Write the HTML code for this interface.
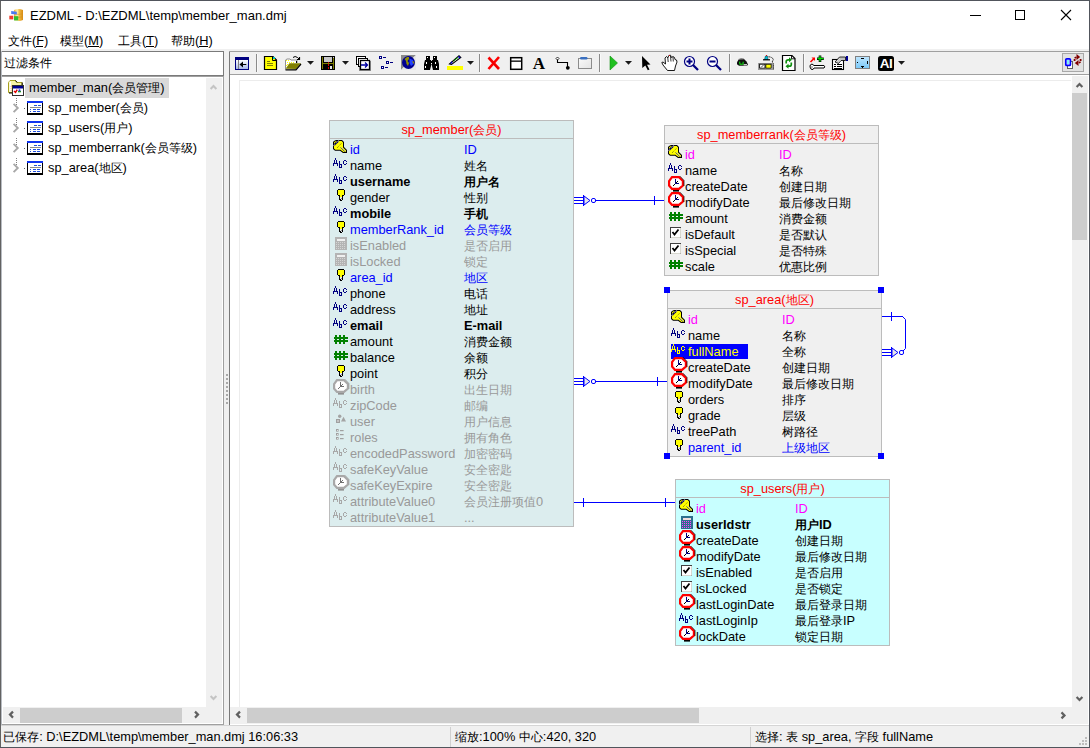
<!DOCTYPE html>
<html><head><meta charset="utf-8"><title>EZDML</title>
<style>html,body{margin:0;padding:0;overflow:hidden}body{width:1090px;height:748px;position:relative;background:#f0f0f0}</style>
</head><body>
<svg width="1090" height="748" viewBox="0 0 1090 748" font-family="Liberation Sans" style="position:absolute;left:0;top:0">
<defs>
<symbol id="key" viewBox="0 0 18 16" overflow="visible">
 <path d="M5 2 H11 L12 3 L13 4 V9 L16 12 V15 H12 L9 12.8 H4 L2 11 V4 L3 3 Z" fill="#000"/>
 <path d="M5.4 3 H10.6 L12 4.4 V9.4 L15 12.4 V14 H12.4 L9.4 11.8 H4.4 L3 10.6 V4.4 L4 3.6 Z" fill="#ffff00"/>
 <path d="M3 7.2 L7.4 2.8" stroke="#000040" stroke-width="1.8"/>
 <path d="M3.6 6.6 L7 3.2" stroke="#ffffff" stroke-width="0.8" stroke-dasharray="0.8 1.2"/>
 <path d="M6 10 L10.6 5.2" stroke="#707010" stroke-width="1" stroke-dasharray="1 1"/>
 <path d="M9.8 9.4 L14.2 13.8" stroke="#202060" stroke-width="1"/>
 <path d="M10.4 9.2 L14.4 13.2" stroke="#ffffff" stroke-width="0.5"/>
 <path d="M7.6 1.8 V4.2 M2 7.6 H3.8" stroke="#a8a8a8" stroke-width="0.7"/>
</symbol>
<symbol id="abc" viewBox="0 0 18 16" overflow="visible">
 <g fill="currentColor" shape-rendering="crispEdges">
 <rect x="5" y="2" width="1" height="2"/><rect x="4" y="4" width="1" height="3"/><rect x="6" y="4" width="1" height="3"/>
 <rect x="3" y="7" width="5" height="1"/><rect x="3" y="8" width="1" height="2"/><rect x="7" y="8" width="1" height="2"/>
 <rect x="9" y="5" width="1" height="7"/><rect x="10" y="8" width="1" height="1"/><rect x="11" y="8" width="1" height="4"/><rect x="10" y="11" width="1" height="1"/>
 <rect x="14" y="4" width="2" height="1"/><rect x="13" y="5" width="1" height="3"/><rect x="16" y="5" width="1" height="1"/><rect x="16" y="7" width="1" height="1"/><rect x="14" y="8" width="2" height="1"/>
 </g>
</symbol>
<symbol id="bulb" viewBox="0 0 16 16" overflow="visible">
 <g shape-rendering="crispEdges">
 <rect x="5" y="2" width="6" height="1" fill="#000"/>
 <rect x="4" y="3" width="8" height="5" fill="#000"/>
 <rect x="5" y="3" width="6" height="5" fill="#ffff00"/>
 <rect x="5" y="8" width="6" height="1" fill="#000"/>
 <rect x="7" y="8" width="2" height="2" fill="#ffff00"/>
 <rect x="6" y="9" width="1" height="4" fill="#000"/><rect x="9" y="9" width="1" height="4" fill="#000"/>
 <rect x="7" y="10" width="2" height="2" fill="#e8e8e8"/><rect x="7" y="12" width="1" height="1" fill="#000"/><rect x="8" y="11" width="1" height="1" fill="#909090"/>
 <rect x="7" y="13" width="2" height="1" fill="#000"/><rect x="8" y="12" width="1" height="1" fill="#e8e8e8"/>
 </g>
</symbol>
<symbol id="calc" viewBox="0 0 16 16" overflow="visible">
 <g shape-rendering="crispEdges">
 <rect x="0" y="0" width="12" height="13" fill="currentColor"/>
 <rect x="2" y="2" width="8" height="2" fill="var(--bar)"/>
 <g fill="var(--dot)">
 <rect x="1" y="5" width="1" height="1"/><rect x="3" y="5" width="1" height="1"/><rect x="5" y="5" width="1" height="1"/><rect x="7" y="5" width="1" height="1"/><rect x="9" y="5" width="1" height="1"/>
 <rect x="1" y="7" width="1" height="1"/><rect x="3" y="7" width="1" height="1"/><rect x="5" y="7" width="1" height="1"/><rect x="7" y="7" width="1" height="1"/><rect x="9" y="7" width="1" height="1"/>
 <rect x="1" y="9" width="1" height="1"/><rect x="3" y="9" width="1" height="1"/><rect x="5" y="9" width="1" height="1"/><rect x="7" y="9" width="1" height="1"/><rect x="9" y="9" width="1" height="1"/>
 <rect x="1" y="11" width="1" height="1"/><rect x="3" y="11" width="1" height="1"/><rect x="5" y="11" width="1" height="1"/><rect x="7" y="11" width="1" height="1"/><rect x="9" y="11" width="1" height="1"/>
 </g></g>
</symbol>
<symbol id="hash" viewBox="0 0 18 16" overflow="visible">
 <g fill="#008000" shape-rendering="crispEdges">
 <rect x="4" y="4" width="2" height="9"/><rect x="8" y="4" width="2" height="9"/><rect x="12" y="4" width="2" height="9"/>
 <rect x="3" y="6" width="14" height="2"/><rect x="3" y="9" width="14" height="2"/>
 </g>
</symbol>
<symbol id="clock" viewBox="0 0 18 16" overflow="visible">
 <rect x="7" y="14" width="6" height="1.6" fill="var(--base)"/>
 <path d="M6 1.1 H13 L16.9 5 V9.5 L13 12.9 H6 L3.1 9.5 V5 Z" fill="#fff" stroke="var(--ring)" stroke-width="2.2"/>
 <path d="M14 0.2 L18 4.5 V10" fill="none" stroke="var(--shade)" stroke-width="0.7"/>
 <g fill="var(--hand)" shape-rendering="crispEdges"><rect x="9" y="3" width="1" height="5"/><rect x="9" y="7" width="4" height="1"/></g>
 <g fill="var(--dots)" shape-rendering="crispEdges"><rect x="11" y="5" width="1" height="1"/><rect x="10" y="6" width="1" height="1"/><rect x="8" y="8" width="1" height="1"/><rect x="7" y="9" width="1" height="1"/></g>
</symbol>
<symbol id="check" viewBox="0 0 16 16" overflow="visible">
 <rect x="0.5" y="0.5" width="10" height="10" fill="#fff" stroke="#404040" stroke-width="1"/>
 <path d="M10.5 1 L10.5 10.5 L1 10.5" fill="none" stroke="#d8d8d0" stroke-width="1"/>
 <path d="M2.5 5 L4.5 7.5 L8.5 2.5" fill="none" stroke="#000" stroke-width="1.8"/>
</symbol>
<symbol id="user" viewBox="0 0 16 16" overflow="visible">
 <g fill="none" stroke="#9a9a9a" stroke-width="1">
 <circle cx="7" cy="2.5" r="1.5"/>
 <rect x="2.5" y="6.5" width="3" height="3"/>
 <path d="M8.5 9.5 L10.5 6 L12.5 9.5 Z"/>
 </g>
</symbol>
<symbol id="roles" viewBox="0 0 16 16" overflow="visible">
 <g fill="none" stroke="#9a9a9a" stroke-width="1">
 <rect x="2.5" y="1.5" width="2" height="2"/><rect x="2.5" y="5.5" width="2" height="2"/><rect x="2.5" y="9.5" width="2" height="2"/>
 <path d="M6 2.5 H9 M6 6.5 H9 M6 10.5 H9"/>
 </g>
</symbol>
<symbol id="tblicon" viewBox="0 0 16 16" overflow="visible">
 <g shape-rendering="crispEdges">
 <rect x="0" y="0" width="16" height="14" fill="#000"/>
 <rect x="1" y="2" width="14" height="10" fill="#fff"/>
 <rect x="0" y="0" width="16" height="2" fill="#1034f0"/>
 <g fill="#2050e0">
  <rect x="7" y="4" width="3" height="1"/><rect x="11" y="4" width="3" height="1"/>
  <rect x="3" y="8" width="1" height="1"/><rect x="6" y="8" width="3" height="1"/><rect x="10" y="8" width="3" height="1"/>
  <rect x="3" y="10" width="1" height="1"/><rect x="6" y="10" width="3" height="1"/><rect x="10" y="10" width="3" height="1"/>
 </g>
 <rect x="3" y="6" width="11" height="1" fill="#8c8c8c"/>
 </g>
</symbol>
<symbol id="dd" viewBox="0 0 8 4" overflow="visible">
 <path d="M0 0 L7 0 L3.5 3.5 Z" fill="#000"/>
</symbol>
</defs>
<rect x="0" y="0" width="1090" height="748" fill="#f0f0f0"/>
<rect x="1" y="1" width="1088" height="48" fill="#ffffff"/>
<rect x="0.5" y="0.5" width="1089" height="747" fill="none" stroke="#51555c" stroke-width="1"/>
<rect x="0" y="1" width="1" height="746" fill="#626262"/>
<g>
<defs><linearGradient id="gcyl" x1="0" y1="0" x2="1" y2="0"><stop offset="0" stop-color="#f0b030"/><stop offset="0.35" stop-color="#fff0b0"/><stop offset="0.6" stop-color="#f0b840"/><stop offset="1" stop-color="#d88a10"/></linearGradient></defs>
<path d="M14 10 Q18.5 8 23 10 V20 Q18.5 22 14 20 Z" fill="url(#gcyl)"/>
<path d="M14 13.8 Q18.5 15 23 13.8 M14 16.8 Q18.5 18 23 16.8" stroke="#d09020" stroke-width="0.6" fill="none"/>
<path d="M11.2 11 L16.8 11.8 L16.8 14.6 L11.2 14 Z" fill="#4a78f0"/>
<rect x="9.3" y="15.7" width="4" height="3.7" fill="#f04030"/>
<rect x="14" y="16.2" width="4.3" height="4.2" fill="#30c030"/>
</g>
<text x="30" y="19.5" font-size="13" fill="#000">EZDML - D:\EZDML\temp\member_man.dmj</text>
<rect x="970" y="15" width="11" height="1" fill="#000"/>
<rect x="1015.5" y="10.5" width="9" height="9" fill="none" stroke="#000" stroke-width="1"/>
<path d="M1061 10 L1071 20 M1071 10 L1061 20" stroke="#000" stroke-width="1.1"/>
<text x="8" y="45" font-size="12.8" fill="#000"><tspan font-size="12.0">文件</tspan>(F)</text>
<text x="60" y="45" font-size="12.8" fill="#000"><tspan font-size="12.0">模型</tspan>(M)</text>
<text x="118" y="45" font-size="12.8" fill="#000"><tspan font-size="12.0">工具</tspan>(T)</text>
<text x="171" y="45" font-size="12.8" fill="#000"><tspan font-size="12.0">帮助</tspan>(H)</text>
<rect x="36" y="46" width="7" height="1" fill="#000"/>
<rect x="88" y="46" width="11" height="1" fill="#000"/>
<rect x="146" y="46" width="8" height="1" fill="#000"/>
<rect x="199" y="46" width="9" height="1" fill="#000"/>
<rect x="1" y="51" width="223" height="25" fill="#ffffff"/>
<rect x="1" y="51" width="223" height="1" fill="#7a7a7a"/>
<rect x="1" y="75" width="223" height="1" fill="#7a7a7a"/>
<rect x="223" y="51" width="1" height="25" fill="#7a7a7a"/>
<text x="4" y="67" font-size="12.8" fill="#000"><tspan font-size="12.0">过滤条件</tspan></text>
<rect x="1" y="76" width="222" height="649" fill="#ffffff"/>
<rect x="1" y="76" width="222" height="1" fill="#a0a0a0"/>
<rect x="223" y="76" width="1" height="649" fill="#a0a0a0"/>
<rect x="1" y="724" width="223" height="1" fill="#a0a0a0"/>
<rect x="206" y="78" width="16" height="629" fill="#f0f0f0"/>
<path d="M210.6 89 L213.5 86 L216.4 89" fill="none" stroke="#c4c4c4" stroke-width="2"/>
<path d="M210.6 696 L213.5 699 L216.4 696" fill="none" stroke="#c4c4c4" stroke-width="2"/>
<rect x="3" y="707" width="203" height="16" fill="#f0f0f0"/>
<rect x="20" y="708" width="162" height="15" fill="#cdcdcd"/>
<path d="M13 711.6 L10 714.6 L13 717.6" fill="none" stroke="#606060" stroke-width="2.2"/>
<path d="M195 711.6 L198 714.6 L195 717.6" fill="none" stroke="#606060" stroke-width="2.2"/>
<rect x="206" y="707" width="16" height="16" fill="#f0f0f0"/>
<rect x="25" y="78" width="144" height="20" fill="#d9d9d9"/>
<g>
<path d="M8.5 92.5 V82.5 L10 80.5 H15.5 L17 82.5 H22 V92.5 Z" fill="#f8f4a8" stroke="#a8a020" stroke-width="1"/>
<rect x="9.5" y="81.5" width="1.5" height="10" fill="#ffffff"/>
<path d="M15.5 80.5 L17 82.5 M22.2 82.5 V85" stroke="#000" stroke-width="1"/>
<path d="M11 86 H21 M11 86 V92" stroke="#f0a090" stroke-width="0.8" stroke-dasharray="1 1"/>
<rect x="9" y="92.5" width="4" height="1" fill="#000"/>
<rect x="12.5" y="85.5" width="11" height="10" fill="#fff" stroke="#303030" stroke-width="1"/>
<rect x="13" y="86" width="10" height="2.5" fill="#000090"/>
<path d="M14 91 L15.5 92.3 L17.2 89.6" stroke="#e00000" stroke-width="1.5" fill="none"/>
<rect x="18" y="91" width="3" height="1.3" fill="#20a020"/>
<circle cx="19.5" cy="90.3" r="1.1" fill="#3030e0"/>
</g>
<text x="29" y="92" font-size="12.8" fill="#000">member_man(<tspan font-size="12.0">会员管理</tspan>)</text>
<rect x="16" y="98" width="1" height="1" fill="#808080"/>
<rect x="16" y="100" width="1" height="1" fill="#808080"/>
<rect x="16" y="102" width="1" height="1" fill="#808080"/>
<rect x="16" y="104" width="1" height="1" fill="#808080"/>
<rect x="24" y="108" width="1" height="1" fill="#606060"/>
<path d="M13.6 103.8 L17.8 108 L13.6 112.2" fill="none" stroke="#a8a8a8" stroke-width="1.9"/>
<use href="#tblicon" x="27" y="101" width="16" height="16"/>
<text x="48" y="112" font-size="12.8" fill="#000">sp_member(<tspan font-size="12.0">会员</tspan>)</text>
<rect x="16" y="118" width="1" height="1" fill="#808080"/>
<rect x="16" y="120" width="1" height="1" fill="#808080"/>
<rect x="16" y="122" width="1" height="1" fill="#808080"/>
<rect x="16" y="124" width="1" height="1" fill="#808080"/>
<rect x="24" y="128" width="1" height="1" fill="#606060"/>
<path d="M13.6 123.8 L17.8 128 L13.6 132.2" fill="none" stroke="#a8a8a8" stroke-width="1.9"/>
<use href="#tblicon" x="27" y="121" width="16" height="16"/>
<text x="48" y="132" font-size="12.8" fill="#000">sp_users(<tspan font-size="12.0">用户</tspan>)</text>
<rect x="16" y="138" width="1" height="1" fill="#808080"/>
<rect x="16" y="140" width="1" height="1" fill="#808080"/>
<rect x="16" y="142" width="1" height="1" fill="#808080"/>
<rect x="16" y="144" width="1" height="1" fill="#808080"/>
<rect x="24" y="148" width="1" height="1" fill="#606060"/>
<path d="M13.6 143.8 L17.8 148 L13.6 152.2" fill="none" stroke="#a8a8a8" stroke-width="1.9"/>
<use href="#tblicon" x="27" y="141" width="16" height="16"/>
<text x="48" y="152" font-size="12.8" fill="#000">sp_memberrank(<tspan font-size="12.0">会员等级</tspan>)</text>
<rect x="16" y="158" width="1" height="1" fill="#808080"/>
<rect x="16" y="160" width="1" height="1" fill="#808080"/>
<rect x="16" y="162" width="1" height="1" fill="#808080"/>
<rect x="16" y="164" width="1" height="1" fill="#808080"/>
<rect x="24" y="168" width="1" height="1" fill="#606060"/>
<path d="M13.6 163.8 L17.8 168 L13.6 172.2" fill="none" stroke="#a8a8a8" stroke-width="1.9"/>
<use href="#tblicon" x="27" y="161" width="16" height="16"/>
<text x="48" y="172" font-size="12.8" fill="#000">sp_area(<tspan font-size="12.0">地区</tspan>)</text>
<rect x="1" y="51" width="1" height="674" fill="#b8bcc2"/>
<rect x="226" y="374" width="2" height="2" fill="#a8a8a8"/>
<rect x="226" y="378" width="2" height="2" fill="#a8a8a8"/>
<rect x="226" y="382" width="2" height="2" fill="#a8a8a8"/>
<rect x="226" y="386" width="2" height="2" fill="#a8a8a8"/>
<rect x="226" y="390" width="2" height="2" fill="#a8a8a8"/>
<rect x="226" y="394" width="2" height="2" fill="#a8a8a8"/>
<rect x="226" y="398" width="2" height="2" fill="#a8a8a8"/>
<rect x="226" y="402" width="2" height="2" fill="#a8a8a8"/>
<rect x="229" y="51" width="1" height="674" fill="#7a7a7a"/>
<rect x="229" y="51" width="860" height="1" fill="#a0a0a0"/>
<rect x="230" y="74" width="859" height="1" fill="#a0a0a0"/>
<rect x="230" y="75" width="859" height="650" fill="#ffffff"/>
<rect x="239" y="80" width="832" height="1" fill="#ececec"/>
<rect x="239" y="80" width="1" height="627" fill="#ececec"/>
<rect x="1072" y="76" width="16" height="631" fill="#f0f0f0"/>
<rect x="1072" y="93" width="15" height="147" fill="#cdcdcd"/>
<path d="M1076.6 87 L1079.5 84 L1082.4 87" fill="none" stroke="#606060" stroke-width="2.2"/>
<path d="M1076.6 697 L1079.5 700 L1082.4 697" fill="none" stroke="#606060" stroke-width="2.2"/>
<rect x="230" y="707" width="858" height="17" fill="#f0f0f0"/>
<rect x="247" y="708" width="452" height="15" fill="#cdcdcd"/>
<rect x="230" y="724" width="859" height="1" fill="#ffffff"/>
<path d="M240 711.6 L237 714.6 L240 717.6" fill="none" stroke="#606060" stroke-width="2.2"/>
<path d="M1061.5 712.4 L1064.5 715.4 L1061.5 718.4" fill="none" stroke="#606060" stroke-width="2.2"/>
<rect x="1" y="725" width="1088" height="1" fill="#d5d5d5"/>
<text x="3.2" y="741" font-size="12.8" fill="#000"><tspan font-size="12.0">已保存</tspan>: D:\EZDML\temp\member_man.dmj 16:06:33</text>
<rect x="450" y="727" width="1" height="20" fill="#d0d0d0"/>
<text x="455" y="741" font-size="12.8" fill="#000"><tspan font-size="12.0">缩放</tspan>:100% <tspan font-size="12.0">中心</tspan>:420, 320</text>
<rect x="750" y="727" width="1" height="20" fill="#d0d0d0"/>
<text x="755" y="741" font-size="12.8" fill="#000"><tspan font-size="12.0">选择</tspan>: <tspan font-size="12.0">表</tspan> sp_area, <tspan font-size="12.0">字段</tspan> fullName</text>
<rect x="1085" y="737" width="2" height="2" fill="#bdbdbd"/>
<rect x="1082" y="740" width="2" height="2" fill="#bdbdbd"/>
<rect x="1085" y="740" width="2" height="2" fill="#bdbdbd"/>
<rect x="1079" y="743" width="2" height="2" fill="#bdbdbd"/>
<rect x="1082" y="743" width="2" height="2" fill="#bdbdbd"/>
<rect x="1085" y="743" width="2" height="2" fill="#bdbdbd"/>
<rect x="256" y="54" width="1" height="18" fill="#8a8a8a"/>
<rect x="257" y="54" width="1" height="18" fill="#ffffff" opacity="0.6"/>
<rect x="479" y="54" width="1" height="18" fill="#8a8a8a"/>
<rect x="480" y="54" width="1" height="18" fill="#ffffff" opacity="0.6"/>
<rect x="599" y="54" width="1" height="18" fill="#8a8a8a"/>
<rect x="600" y="54" width="1" height="18" fill="#ffffff" opacity="0.6"/>
<rect x="729" y="54" width="1" height="18" fill="#8a8a8a"/>
<rect x="730" y="54" width="1" height="18" fill="#ffffff" opacity="0.6"/>
<rect x="803" y="54" width="1" height="18" fill="#8a8a8a"/>
<rect x="804" y="54" width="1" height="18" fill="#ffffff" opacity="0.6"/>
<path d="M307 61 L314 61 L310.5 64.8 Z" fill="#1a1a1a"/>
<path d="M342 61 L349 61 L345.5 64.8 Z" fill="#1a1a1a"/>
<path d="M467 61 L474 61 L470.5 64.8 Z" fill="#1a1a1a"/>
<path d="M625 61 L632 61 L628.5 64.8 Z" fill="#1a1a1a"/>
<path d="M898 61 L905 61 L901.5 64.8 Z" fill="#1a1a1a"/>
<g shape-rendering="crispEdges">
<rect x="235" y="57" width="14" height="13" fill="#000080"/>
<defs><linearGradient id="gb" x1="0" y1="0" x2="0" y2="1"><stop offset="0" stop-color="#ffffff"/><stop offset="1" stop-color="#a8b8e8"/></linearGradient></defs>
<rect x="236" y="60" width="12" height="9" fill="url(#gb)"/>
<rect x="238" y="60" width="1" height="9" fill="#808080"/>
<rect x="240" y="64" width="6" height="1" fill="#000"/>
<rect x="246" y="64" width="1" height="1" fill="#a0a0a0"/>
</g>
<path d="M239.5 64.5 L243 61.5 L243 67.5 Z" fill="#000"/>
<path d="M264.5 56.5 L273 56.5 L276.5 60 L276.5 69.5 L264.5 69.5 Z" fill="#ffff00" stroke="#000" stroke-width="1.2"/>
<path d="M272.5 56.5 L272.5 60.5 L276.5 60.5" fill="none" stroke="#000" stroke-width="1"/>
<rect x="273" y="57" width="2" height="2" fill="#00c0c0"/>
<g fill="#808000" shape-rendering="crispEdges"><rect x="267" y="61" width="3" height="1"/><rect x="267" y="63" width="6" height="1"/><rect x="267" y="65" width="6" height="1"/></g>
<path d="M285.5 69.5 L285.5 60 L287 59 L290 59 L291 60 L297 60 L297 63" fill="#fff" stroke="#909090" stroke-width="1"/>
<g fill="#ffff00"><rect x="286" y="60" width="1" height="1"/><rect x="288" y="60" width="1" height="1"/><rect x="287" y="62" width="1" height="1"/><rect x="289" y="62" width="1" height="1"/><rect x="291" y="62" width="1" height="1"/><rect x="293" y="62" width="1" height="1"/><rect x="287" y="64" width="1" height="1"/><rect x="286" y="65" width="1" height="1"/></g>
<rect x="296" y="61" width="1" height="2" fill="#000"/>
<path d="M286 68.5 L289.5 63.5 L300.5 63.5 L296 69 Z" fill="#808000" stroke="#808000" stroke-width="0.5"/>
<path d="M285.5 69.8 L296 69.8 L301 64" fill="none" stroke="#000" stroke-width="1.2"/>
<path d="M293 57.5 Q295 55.5 297.5 57.5 L299 59" fill="none" stroke="#000" stroke-width="1"/>
<path d="M297 59.5 L299.5 59.5 L299.5 57" fill="none" stroke="#000" stroke-width="1.2"/>
<g shape-rendering="crispEdges">
<rect x="321" y="56" width="14" height="14" fill="#000"/>
<rect x="322" y="57" width="1" height="12" fill="#808000"/>
<rect x="333" y="58" width="1" height="11" fill="#808000"/>
<rect x="322" y="63" width="12" height="1" fill="#808000"/>
<rect x="324" y="57" width="8" height="5" fill="#c8c8c8"/>
<rect x="333" y="57" width="1" height="1" fill="#c8c8c8"/>
<rect x="328" y="62" width="1" height="1" fill="#e00000"/>
<rect x="328" y="64" width="1" height="2" fill="#e00000"/>
<rect x="328" y="67" width="1" height="2" fill="#e00000"/>
<rect x="330" y="66" width="2" height="3" fill="#e8e8e8"/>
</g>
<rect x="359" y="61" width="12" height="10" fill="#909090"/>
<rect x="356.5" y="56.5" width="9" height="8" fill="#fff" stroke="#000" stroke-width="1"/>
<rect x="358.5" y="58.5" width="9" height="8" fill="#fff" stroke="#000" stroke-width="1"/>
<rect x="360.5" y="60.5" width="9" height="9" fill="#fff" stroke="#000" stroke-width="1.3"/>
<path d="M361 65 L367.5 65 M365 62.5 L367.5 65 L365 67.5" fill="none" stroke="#0000a0" stroke-width="1.3"/>
<g fill="#000080" shape-rendering="crispEdges">
<rect x="379" y="56" width="3" height="3"/><rect x="383" y="57" width="3" height="1"/>
<rect x="386" y="61" width="3" height="3"/><rect x="390" y="62" width="3" height="1"/>
<rect x="381" y="66" width="3" height="3"/><rect x="385" y="67" width="3" height="1"/>
</g>
<g fill="#fff"><rect x="380" y="57" width="1" height="1"/><rect x="387" y="62" width="1" height="1"/><rect x="382" y="67" width="1" height="1"/></g>
<path d="M401 55 L416 55 L401 70 Z" fill="#8a8a8a"/>
<path d="M416 55 L416 70 L401 70 Z" fill="#e8e8e8"/>
<circle cx="408.5" cy="62.5" r="6.5" fill="#000090"/>
<path d="M407 57 L409 57 L409 59 L407.5 61 L409 63 L408 66 L406.5 64 L406 61 L404.5 59 Z" fill="#909000"/>
<path d="M409.5 58.5 L413 60 L413.5 64 L411 66 L409.5 63 Z" fill="#2040ff"/>
<path d="M412 61 L414.5 62 L413.5 64 Z" fill="#909000"/>
<g fill="#000">
<rect x="426" y="56" width="4" height="4"/><rect x="433" y="56" width="4" height="4"/>
<path d="M425 60 L431 60 L431.5 64 L430 70 L424 70 L424 64 Z"/>
<path d="M432 60 L438 60 L439 64 L439 70 L433 70 L431.5 64 Z"/>
<rect x="430" y="61" width="3" height="3"/>
</g>
<g fill="#fff"><rect x="427" y="57" width="1" height="1"/><rect x="434" y="57" width="1" height="1"/><rect x="426" y="62" width="1" height="2"/><rect x="431" y="63" width="1" height="1"/><rect x="425" y="66" width="1" height="2"/><rect x="435" y="62" width="1" height="2"/><rect x="436" y="66" width="1" height="2"/></g>
<path d="M449.5 64 L459 55.8 L460.8 57.5 L451.5 64.5 Z" fill="#fff" stroke="#000" stroke-width="1.1"/>
<path d="M450 63.5 L452 61 L452.5 63.5 Z" fill="#0000d0"/>
<path d="M453.5 61 L458 57.5" stroke="#00a000" stroke-width="1"/>
<path d="M458.5 56.5 L460 58" stroke="#0000d0" stroke-width="1.4"/>
<rect x="447" y="66" width="16" height="4" fill="#ffff00"/>
<path d="M488.5 57.5 L499 69 M499 57 L488.5 69" stroke="#ff0000" stroke-width="2.6"/>
<path d="M489 58.5 L498.5 69" stroke="#800000" stroke-width="0.5" opacity="0.5"/>
<rect x="510.7" y="57.7" width="11" height="11.6" fill="#fff" stroke="#000" stroke-width="1.5"/>
<rect x="511" y="60.5" width="11" height="1.3" fill="#000"/>
<text x="539" y="69.3" font-family="Liberation Serif" font-weight="bold" font-size="17" text-anchor="middle" fill="#000">A</text>
<path d="M557.5 59 L557.5 62.5 L567.5 62.5 L567.5 67" fill="none" stroke="#000" stroke-width="1.1"/>
<path d="M557.5 57 L559 58.5 L557.5 60 L556 58.5 Z" fill="#fff" stroke="#000" stroke-width="0.8"/>
<circle cx="567.8" cy="67.8" r="1.9" fill="#000"/>
<defs><linearGradient id="gw" x1="0" y1="0" x2="1" y2="1"><stop offset="0" stop-color="#fafafa"/><stop offset="1" stop-color="#e4e4e4"/></linearGradient></defs>
<rect x="578.5" y="58.5" width="13" height="10" fill="url(#gw)" stroke="#8c8c8c" stroke-width="1"/>
<rect x="580" y="57" width="7.5" height="2.5" rx="1.2" fill="#3a70c0"/>
<path d="M610 56 L617.5 63 L610 70 Z" fill="#20c020" stroke="#109010" stroke-width="0.6"/>
<path d="M642 56 L650.5 64.5 L647 64.8 L649.5 69.5 L647.8 70.3 L645.3 65.5 L642.3 68 Z" fill="#000"/>
<path d="M667.5 70.5 L663 65 L661.8 62.5 L663 62 L665.5 64 L665 58 L666.5 56.5 L667.8 58 L668.8 55.5 L670.5 55.2 L671.5 57.5 L673 56.5 L674.5 57.5 L675 59.5 L676.5 60 L677 62 L675.5 66 L674.5 70.5 Z" fill="#fff" stroke="#000" stroke-width="0.9"/>
<path d="M667.8 58 L668.2 62 M670.5 56 L671 61.5 M673 57 L673.3 61.5" stroke="#000" stroke-width="0.8"/>
<rect x="669" y="55" width="1" height="1" fill="#d00000"/>
<path d="M693.0 65.0 L698 70" stroke="#000080" stroke-width="2.3"/>
<circle cx="689.5" cy="61.5" r="5" fill="#fff" stroke="#000080" stroke-width="1.2"/>
<rect x="686.5" y="60.5" width="6" height="2" fill="#000080"/>
<rect x="688.5" y="58.5" width="2" height="6" fill="#000080"/>
<path d="M716.0 65.0 L721 70" stroke="#000080" stroke-width="2.3"/>
<circle cx="712.5" cy="61.5" r="5" fill="#fff" stroke="#000080" stroke-width="1.2"/>
<rect x="709.5" y="60.5" width="6" height="2" fill="#000080"/>
<path d="M737 62.2 L738.6 59.6 L741 58.6 L744 58.9 L746.5 61.6 L748 64.6 L747 65.8 L739 65.8 L737 64.2 Z" fill="#101010"/>
<path d="M738.8 59.2 L743.8 58.9" stroke="#8a8a8a" stroke-width="1"/>
<path d="M739.6 61.6 L740 64.1 L743 64.2 L743.2 61.8" fill="none" stroke="#10e010" stroke-width="1.1"/>
<rect x="743.6" y="64.2" width="3.4" height="1.1" fill="#f4f4f4"/>
<path d="M764.5 59.5 L765.5 56 L767.5 56 L768 59.5 Z" fill="#00c0d0" stroke="#004060" stroke-width="0.6"/>
<rect x="763" y="59.2" width="7" height="1.2" fill="#000"/>
<rect x="766" y="55" width="1" height="1" fill="#e00000"/>
<path d="M768.5 56.8 Q772.5 57 773.3 59.5 L772.2 62 L773.5 64 L773.5 69.5" fill="none" stroke="#000" stroke-width="0.9" stroke-dasharray="1.3 0.6"/>
<rect x="758.5" y="63.5" width="14" height="6" fill="#fff" stroke="#9a9a9a" stroke-width="1"/>
<rect x="759.6" y="64.2" width="5.4" height="4" fill="#fff" stroke="#000" stroke-width="0.9"/>
<rect x="765.8" y="64.2" width="5.4" height="4" fill="#ffff00" stroke="#000" stroke-width="0.9"/>
<path d="M761 67.5 L763.5 65" stroke="#000" stroke-width="0.7"/>
<path d="M782.5 55.5 L792 55.5 L795 58.5 L795 70.5 L782.5 70.5 Z" fill="#fff" stroke="#000" stroke-width="1.2"/>
<path d="M791.5 55.5 L791.5 58.8 L795 58.8" fill="none" stroke="#000" stroke-width="0.9"/>
<path d="M786.2 63.5 L786.2 61.5 Q786.2 59.8 788.2 59.8 L789.5 59.8" fill="none" stroke="#109010" stroke-width="1.7"/>
<path d="M789 57.3 L792 59.8 L789 62.3 Z" fill="#109010"/>
<path d="M791.3 62.5 L791.3 64.5 Q791.3 66.2 789.3 66.2 L788 66.2" fill="none" stroke="#109010" stroke-width="1.7"/>
<path d="M788.5 63.7 L785.5 66.2 L788.5 68.7 Z" fill="#109010"/>
<path d="M810.5 62 L814 58.5" stroke="#ff0000" stroke-width="1.6"/>
<path d="M811.5 57.5 L815 57.5 L815 61 Z" fill="#ff0000"/>
<path d="M820 55.5 L820 62 M817 58.7 L823.8 58.7" stroke="#000" stroke-width="2.6"/>
<path d="M820 56 L820 61.5 M817.5 58.7 L823.5 58.7" stroke="#00e000" stroke-width="1.3"/>
<path d="M812 64 Q809.5 64.5 810 67 Q810.5 70 813 69.5 L814 68 L824 68 Q825.5 67 824 65.5 L814 65.5 Z" fill="#fff" stroke="#000" stroke-width="1"/>
<rect x="811" y="66" width="2" height="2" fill="#c0c0c0"/>
<rect x="832.5" y="59.5" width="11" height="10" fill="#fff" stroke="#000" stroke-width="1.1"/>
<g fill="#000" shape-rendering="crispEdges"><rect x="834" y="64" width="2" height="1"/><rect x="837" y="64" width="5" height="1"/><rect x="834" y="66" width="2" height="1"/><rect x="837" y="66" width="5" height="1"/><rect x="834" y="68" width="8" height="1"/></g>
<path d="M835 62 L839.5 57 L845.5 57 L845.5 60.5 L841 60.5 L838.5 63.5 Z" fill="#c0c0c0" stroke="#000" stroke-width="0.8"/>
<path d="M836.5 61.5 L840 58.5 M838.5 62 L841 59.5" stroke="#fff" stroke-width="0.6"/>
<rect x="846" y="56" width="2" height="5" fill="#000090"/>
<defs><linearGradient id="gs" x1="0" y1="0" x2="0" y2="1"><stop offset="0" stop-color="#bfe6ff"/><stop offset="1" stop-color="#78c8f8"/></linearGradient></defs>
<rect x="855.5" y="56.5" width="14" height="12" fill="url(#gs)" stroke="#808080" stroke-width="1"/>
<g fill="#000" shape-rendering="crispEdges"><rect x="861" y="58" width="3" height="1"/><rect x="857" y="62" width="1" height="1"/><rect x="867" y="61" width="1" height="3"/><rect x="861" y="66" width="3" height="1"/><rect x="862" y="67" width="1" height="1"/></g>
<rect x="878" y="56" width="16" height="15" rx="2.5" fill="#000"/>
<text x="886" y="68.3" font-family="Liberation Sans" font-weight="bold" font-size="13.5" text-anchor="middle" fill="#fff" letter-spacing="-0.6">AI</text>
<rect x="1062.5" y="53.5" width="21" height="18" fill="#e2e2e2" stroke="#a8a8a8" stroke-width="1"/>
<rect x="1067.5" y="61.5" width="5" height="7" fill="#fff" stroke="#606060" stroke-width="1"/>
<rect x="1065.8" y="58.8" width="4.6" height="6.6" rx="1" fill="#fff" stroke="#0000ff" stroke-width="1.7"/>
<rect x="1067" y="60.5" width="2" height="1" fill="#00e0f0"/><rect x="1067" y="62.5" width="2" height="1" fill="#00e0f0"/>
<path d="M1074.6 61 L1074.6 58 L1077 57" fill="none" stroke="#800000" stroke-width="1.8" stroke-dasharray="2 1"/>
<path d="M1076.5 54 L1080.2 57 L1076.5 60 Z" fill="#800000"/>
<path d="M1080.6 59 L1080.6 62 L1078 63" fill="none" stroke="#800000" stroke-width="1.8" stroke-dasharray="2 1"/>
<path d="M1078.5 60 L1074.8 63 L1078.5 66 Z" fill="#800000"/>
<rect x="329" y="120" width="244" height="406" fill="#dcedee"/>
<rect x="329.5" y="120.5" width="244" height="406" fill="none" stroke="#bcbcbc" stroke-width="1"/>
<rect x="330" y="138" width="243" height="1" fill="#bcbcbc"/>
<text x="451.5" y="134" font-size="12.8" fill="#ff0000" text-anchor="middle">sp_member(<tspan font-size="12.0">会员</tspan>)</text>
<use href="#key" x="331" y="138" width="18" height="16"/>
<text x="350" y="154" font-size="12.8" fill="#0000ff">id</text>
<text x="464" y="154" font-size="12.8" fill="#0000ff">ID</text>
<use href="#abc" x="330" y="156" width="18" height="16" color="#000080"/>
<text x="350" y="170" font-size="12.8" fill="#000">name</text>
<text x="464" y="170" font-size="12.8" fill="#000"><tspan font-size="12.0">姓名</tspan></text>
<use href="#abc" x="330" y="172" width="18" height="16" color="#000080"/>
<text x="350" y="186" font-size="12.8" fill="#000" font-weight="bold">username</text>
<text x="464" y="186" font-size="12.8" fill="#000" font-weight="bold"><tspan font-size="12.0">用户名</tspan></text>
<use href="#bulb" x="333" y="187" width="16" height="16"/>
<text x="350" y="202" font-size="12.8" fill="#000">gender</text>
<text x="464" y="202" font-size="12.8" fill="#000"><tspan font-size="12.0">性别</tspan></text>
<use href="#abc" x="330" y="204" width="18" height="16" color="#000080"/>
<text x="350" y="218" font-size="12.8" fill="#000" font-weight="bold">mobile</text>
<text x="464" y="218" font-size="12.8" fill="#000" font-weight="bold"><tspan font-size="12.0">手机</tspan></text>
<use href="#bulb" x="333" y="219" width="16" height="16"/>
<text x="350" y="234" font-size="12.8" fill="#0000ff">memberRank_id</text>
<text x="464" y="234" font-size="12.8" fill="#0000ff"><tspan font-size="12.0">会员等级</tspan></text>
<use href="#calc" x="335" y="237" width="16" height="16" color="#b4b4b4" style="--dot:#d4d4d4;--bar:#f0f0f0"/>
<text x="350" y="250" font-size="12.8" fill="#999999">isEnabled</text>
<text x="464" y="250" font-size="12.8" fill="#999999"><tspan font-size="12.0">是否启用</tspan></text>
<use href="#calc" x="335" y="253" width="16" height="16" color="#b4b4b4" style="--dot:#d4d4d4;--bar:#f0f0f0"/>
<text x="350" y="266" font-size="12.8" fill="#999999">isLocked</text>
<text x="464" y="266" font-size="12.8" fill="#999999"><tspan font-size="12.0">锁定</tspan></text>
<use href="#bulb" x="333" y="267" width="16" height="16"/>
<text x="350" y="282" font-size="12.8" fill="#0000ff">area_id</text>
<text x="464" y="282" font-size="12.8" fill="#0000ff"><tspan font-size="12.0">地区</tspan></text>
<use href="#abc" x="330" y="284" width="18" height="16" color="#000080"/>
<text x="350" y="298" font-size="12.8" fill="#000">phone</text>
<text x="464" y="298" font-size="12.8" fill="#000"><tspan font-size="12.0">电话</tspan></text>
<use href="#abc" x="330" y="300" width="18" height="16" color="#000080"/>
<text x="350" y="314" font-size="12.8" fill="#000">address</text>
<text x="464" y="314" font-size="12.8" fill="#000"><tspan font-size="12.0">地址</tspan></text>
<use href="#abc" x="330" y="316" width="18" height="16" color="#000080"/>
<text x="350" y="330" font-size="12.8" fill="#000" font-weight="bold">email</text>
<text x="464" y="330" font-size="12.8" fill="#000" font-weight="bold">E-mail</text>
<use href="#hash" x="331" y="331" width="18" height="16"/>
<text x="350" y="346" font-size="12.8" fill="#000">amount</text>
<text x="464" y="346" font-size="12.8" fill="#000"><tspan font-size="12.0">消费金额</tspan></text>
<use href="#hash" x="331" y="347" width="18" height="16"/>
<text x="350" y="362" font-size="12.8" fill="#000">balance</text>
<text x="464" y="362" font-size="12.8" fill="#000"><tspan font-size="12.0">余额</tspan></text>
<use href="#bulb" x="333" y="363" width="16" height="16"/>
<text x="350" y="378" font-size="12.8" fill="#000">point</text>
<text x="464" y="378" font-size="12.8" fill="#000"><tspan font-size="12.0">积分</tspan></text>
<use href="#clock" x="331" y="379" width="18" height="16" style="--ring:#a8a8a8;--hand:#707070;--base:#909090;--shade:#a0a0a0;--dots:#707070"/>
<text x="350" y="394" font-size="12.8" fill="#999999">birth</text>
<text x="464" y="394" font-size="12.8" fill="#999999"><tspan font-size="12.0">出生日期</tspan></text>
<use href="#abc" x="330" y="396" width="18" height="16" color="#a8a8a8"/>
<text x="350" y="410" font-size="12.8" fill="#999999">zipCode</text>
<text x="464" y="410" font-size="12.8" fill="#999999"><tspan font-size="12.0">邮编</tspan></text>
<circle cx="339.7" cy="416.2" r="1.7" fill="#a4a4a4"/>
<rect x="336" y="419" width="4" height="4" fill="#a0a0a0"/><rect x="337" y="420" width="2" height="2" fill="#c4c4c4"/>
<path d="M341 421.4 H346 L343.5 416.8 Z" fill="#a4a4a4"/>
<text x="350" y="426" font-size="12.8" fill="#999999">user</text>
<text x="464" y="426" font-size="12.8" fill="#999999"><tspan font-size="12.0">用户信息</tspan></text>
<rect x="336" y="429" width="2.6" height="2.6" fill="#a0a0a0"/><rect x="337" y="430" width="1" height="1" fill="#e0e0e0"/>
<rect x="340" y="430" width="3.6" height="1.2" fill="#a0a0a0"/>
<rect x="336" y="433" width="2.6" height="2.6" fill="#a0a0a0"/><rect x="337" y="434" width="1" height="1" fill="#e0e0e0"/>
<rect x="340" y="434" width="3.6" height="1.2" fill="#a0a0a0"/>
<rect x="336" y="437" width="2.6" height="2.6" fill="#a0a0a0"/><rect x="337" y="438" width="1" height="1" fill="#e0e0e0"/>
<rect x="340" y="438" width="3.6" height="1.2" fill="#a0a0a0"/>
<text x="350" y="442" font-size="12.8" fill="#999999">roles</text>
<text x="464" y="442" font-size="12.8" fill="#999999"><tspan font-size="12.0">拥有角色</tspan></text>
<use href="#abc" x="330" y="444" width="18" height="16" color="#a8a8a8"/>
<text x="350" y="458" font-size="12.8" fill="#999999">encodedPassword</text>
<text x="464" y="458" font-size="12.8" fill="#999999"><tspan font-size="12.0">加密密码</tspan></text>
<use href="#abc" x="330" y="460" width="18" height="16" color="#a8a8a8"/>
<text x="350" y="474" font-size="12.8" fill="#999999">safeKeyValue</text>
<text x="464" y="474" font-size="12.8" fill="#999999"><tspan font-size="12.0">安全密匙</tspan></text>
<use href="#clock" x="331" y="475" width="18" height="16" style="--ring:#a8a8a8;--hand:#707070;--base:#909090;--shade:#a0a0a0;--dots:#707070"/>
<text x="350" y="490" font-size="12.8" fill="#999999">safeKeyExpire</text>
<text x="464" y="490" font-size="12.8" fill="#999999"><tspan font-size="12.0">安全密匙</tspan></text>
<use href="#abc" x="330" y="492" width="18" height="16" color="#a8a8a8"/>
<text x="350" y="506" font-size="12.8" fill="#999999">attributeValue0</text>
<text x="464" y="506" font-size="12.8" fill="#999999"><tspan font-size="12.0">会员注册项值</tspan>0</text>
<use href="#abc" x="330" y="508" width="18" height="16" color="#a8a8a8"/>
<text x="350" y="522" font-size="12.8" fill="#999999">attributeValue1</text>
<text x="464" y="522" font-size="12.8" fill="#999999">...</text>
<rect x="664" y="125" width="214" height="150" fill="#f0f0f0"/>
<rect x="664.5" y="125.5" width="214" height="150" fill="none" stroke="#bcbcbc" stroke-width="1"/>
<rect x="665" y="143" width="213" height="1" fill="#bcbcbc"/>
<text x="771.5" y="139" font-size="12.8" fill="#ff0000" text-anchor="middle">sp_memberrank(<tspan font-size="12.0">会员等级</tspan>)</text>
<use href="#key" x="666" y="143" width="18" height="16"/>
<text x="685" y="159" font-size="12.8" fill="#ff00ff">id</text>
<text x="779" y="159" font-size="12.8" fill="#ff00ff">ID</text>
<use href="#abc" x="665" y="161" width="18" height="16" color="#000080"/>
<text x="685" y="175" font-size="12.8" fill="#000">name</text>
<text x="779" y="175" font-size="12.8" fill="#000"><tspan font-size="12.0">名称</tspan></text>
<use href="#clock" x="666" y="176" width="18" height="16" style="--ring:#ff0000;--hand:#000080;--base:#000;--shade:#000;--dots:#000"/>
<text x="685" y="191" font-size="12.8" fill="#000">createDate</text>
<text x="779" y="191" font-size="12.8" fill="#000"><tspan font-size="12.0">创建日期</tspan></text>
<use href="#clock" x="666" y="192" width="18" height="16" style="--ring:#ff0000;--hand:#000080;--base:#000;--shade:#000;--dots:#000"/>
<text x="685" y="207" font-size="12.8" fill="#000">modifyDate</text>
<text x="779" y="207" font-size="12.8" fill="#000"><tspan font-size="12.0">最后修改日期</tspan></text>
<use href="#hash" x="666" y="208" width="18" height="16"/>
<text x="685" y="223" font-size="12.8" fill="#000">amount</text>
<text x="779" y="223" font-size="12.8" fill="#000"><tspan font-size="12.0">消费金额</tspan></text>
<use href="#check" x="670" y="227" width="16" height="16"/>
<text x="685" y="239" font-size="12.8" fill="#000">isDefault</text>
<text x="779" y="239" font-size="12.8" fill="#000"><tspan font-size="12.0">是否默认</tspan></text>
<use href="#check" x="670" y="243" width="16" height="16"/>
<text x="685" y="255" font-size="12.8" fill="#000">isSpecial</text>
<text x="779" y="255" font-size="12.8" fill="#000"><tspan font-size="12.0">是否特殊</tspan></text>
<use href="#hash" x="666" y="256" width="18" height="16"/>
<text x="685" y="271" font-size="12.8" fill="#000">scale</text>
<text x="779" y="271" font-size="12.8" fill="#000"><tspan font-size="12.0">优惠比例</tspan></text>
<rect x="667" y="290" width="214" height="166" fill="#f0f0f0"/>
<rect x="667.5" y="290.5" width="214" height="166" fill="none" stroke="#bcbcbc" stroke-width="1"/>
<rect x="668" y="308" width="213" height="1" fill="#bcbcbc"/>
<text x="774.5" y="304" font-size="12.8" fill="#ff0000" text-anchor="middle">sp_area(<tspan font-size="12.0">地区</tspan>)</text>
<use href="#key" x="669" y="308" width="18" height="16"/>
<text x="688" y="324" font-size="12.8" fill="#ff00ff">id</text>
<text x="782" y="324" font-size="12.8" fill="#ff00ff">ID</text>
<use href="#abc" x="668" y="326" width="18" height="16" color="#000080"/>
<text x="688" y="340" font-size="12.8" fill="#000">name</text>
<text x="782" y="340" font-size="12.8" fill="#000"><tspan font-size="12.0">名称</tspan></text>
<rect x="671" y="344" width="77" height="15" fill="#0000ff"/>
<use href="#abc" x="668" y="342" width="18" height="16" color="#ffff00"/>
<text x="688" y="356" font-size="12.8" fill="#ffff00">fullName</text>
<text x="782" y="356" font-size="12.8" fill="#000"><tspan font-size="12.0">全称</tspan></text>
<use href="#clock" x="669" y="357" width="18" height="16" style="--ring:#ff0000;--hand:#000080;--base:#000;--shade:#000;--dots:#000"/>
<text x="688" y="372" font-size="12.8" fill="#000">createDate</text>
<text x="782" y="372" font-size="12.8" fill="#000"><tspan font-size="12.0">创建日期</tspan></text>
<use href="#clock" x="669" y="373" width="18" height="16" style="--ring:#ff0000;--hand:#000080;--base:#000;--shade:#000;--dots:#000"/>
<text x="688" y="388" font-size="12.8" fill="#000">modifyDate</text>
<text x="782" y="388" font-size="12.8" fill="#000"><tspan font-size="12.0">最后修改日期</tspan></text>
<use href="#bulb" x="671" y="389" width="16" height="16"/>
<text x="688" y="404" font-size="12.8" fill="#000">orders</text>
<text x="782" y="404" font-size="12.8" fill="#000"><tspan font-size="12.0">排序</tspan></text>
<use href="#bulb" x="671" y="405" width="16" height="16"/>
<text x="688" y="420" font-size="12.8" fill="#000">grade</text>
<text x="782" y="420" font-size="12.8" fill="#000"><tspan font-size="12.0">层级</tspan></text>
<use href="#abc" x="668" y="422" width="18" height="16" color="#000080"/>
<text x="688" y="436" font-size="12.8" fill="#000">treePath</text>
<text x="782" y="436" font-size="12.8" fill="#000"><tspan font-size="12.0">树路径</tspan></text>
<use href="#bulb" x="671" y="437" width="16" height="16"/>
<text x="688" y="452" font-size="12.8" fill="#0000ff">parent_id</text>
<text x="782" y="452" font-size="12.8" fill="#0000ff"><tspan font-size="12.0">上级地区</tspan></text>
<rect x="675" y="479" width="214" height="166" fill="#c8ffff"/>
<rect x="675.5" y="479.5" width="214" height="166" fill="none" stroke="#bcbcbc" stroke-width="1"/>
<rect x="676" y="497" width="213" height="1" fill="#bcbcbc"/>
<text x="782.5" y="493" font-size="12.8" fill="#ff0000" text-anchor="middle">sp_users(<tspan font-size="12.0">用户</tspan>)</text>
<use href="#key" x="677" y="497" width="18" height="16"/>
<text x="696" y="513" font-size="12.8" fill="#ff00ff">id</text>
<text x="795" y="513" font-size="12.8" fill="#ff00ff">ID</text>
<use href="#calc" x="681" y="516" width="16" height="16" color="#2c6f8e" style="--dot:#ff40ff;--bar:#f0dcdc"/>
<text x="696" y="529" font-size="12.8" fill="#000" font-weight="bold">userIdstr</text>
<text x="795" y="529" font-size="12.8" fill="#000" font-weight="bold"><tspan font-size="12.0">用户</tspan>ID</text>
<use href="#clock" x="677" y="530" width="18" height="16" style="--ring:#ff0000;--hand:#000080;--base:#000;--shade:#000;--dots:#000"/>
<text x="696" y="545" font-size="12.8" fill="#000">createDate</text>
<text x="795" y="545" font-size="12.8" fill="#000"><tspan font-size="12.0">创建日期</tspan></text>
<use href="#clock" x="677" y="546" width="18" height="16" style="--ring:#ff0000;--hand:#000080;--base:#000;--shade:#000;--dots:#000"/>
<text x="696" y="561" font-size="12.8" fill="#000">modifyDate</text>
<text x="795" y="561" font-size="12.8" fill="#000"><tspan font-size="12.0">最后修改日期</tspan></text>
<use href="#check" x="681" y="565" width="16" height="16"/>
<text x="696" y="577" font-size="12.8" fill="#000">isEnabled</text>
<text x="795" y="577" font-size="12.8" fill="#000"><tspan font-size="12.0">是否启用</tspan></text>
<use href="#check" x="681" y="581" width="16" height="16"/>
<text x="696" y="593" font-size="12.8" fill="#000">isLocked</text>
<text x="795" y="593" font-size="12.8" fill="#000"><tspan font-size="12.0">是否锁定</tspan></text>
<use href="#clock" x="677" y="594" width="18" height="16" style="--ring:#ff0000;--hand:#000080;--base:#000;--shade:#000;--dots:#000"/>
<text x="696" y="609" font-size="12.8" fill="#000">lastLoginDate</text>
<text x="795" y="609" font-size="12.8" fill="#000"><tspan font-size="12.0">最后登录日期</tspan></text>
<use href="#abc" x="676" y="611" width="18" height="16" color="#000080"/>
<text x="696" y="625" font-size="12.8" fill="#000">lastLoginIp</text>
<text x="795" y="625" font-size="12.8" fill="#000"><tspan font-size="12.0">最后登录</tspan>IP</text>
<use href="#clock" x="677" y="626" width="18" height="16" style="--ring:#ff0000;--hand:#000080;--base:#000;--shade:#000;--dots:#000"/>
<text x="696" y="641" font-size="12.8" fill="#000">lockDate</text>
<text x="795" y="641" font-size="12.8" fill="#000"><tspan font-size="12.0">锁定日期</tspan></text>
<rect x="664" y="287" width="6" height="6" fill="#0000ff"/>
<rect x="878" y="287" width="6" height="6" fill="#0000ff"/>
<rect x="664" y="453" width="6" height="6" fill="#0000ff"/>
<rect x="878" y="453" width="6" height="6" fill="#0000ff"/>
<g stroke="#0000ff" stroke-width="1" fill="none" shape-rendering="crispEdges">
<path d="M574 197.5 H583"/>
<path d="M574 200.5 H583"/>
<path d="M574 203.5 H583"/>
<path d="M583.5 195 V206"/>
</g>
<path d="M584 196 L590 200.5 L584 205 Z" fill="#e8e8e8" stroke="#0000ff" stroke-width="1"/>
<rect x="591.5" y="198.5" width="4" height="4" rx="1.5" fill="#fff" stroke="#0000ff" stroke-width="1"/>
<rect x="596" y="200" width="68" height="1" fill="#0000ff"/>
<rect x="654" y="196" width="1" height="9" fill="#0000ff"/>
<g stroke="#0000ff" stroke-width="1" fill="none" shape-rendering="crispEdges">
<path d="M574 378.5 H583"/>
<path d="M574 381.5 H583"/>
<path d="M574 384.5 H583"/>
<path d="M583.5 376 V387"/>
</g>
<path d="M584 377 L590 381.5 L584 386 Z" fill="#e8e8e8" stroke="#0000ff" stroke-width="1"/>
<rect x="591.5" y="379.5" width="4" height="4" rx="1.5" fill="#fff" stroke="#0000ff" stroke-width="1"/>
<rect x="596" y="381" width="71" height="1" fill="#0000ff"/>
<rect x="657" y="377" width="1" height="9" fill="#0000ff"/>
<rect x="574" y="502" width="101" height="1" fill="#0000ff"/>
<rect x="583" y="498" width="1" height="9" fill="#0000ff"/>
<rect x="665" y="498" width="1" height="9" fill="#0000ff"/>
<rect x="882" y="316" width="21" height="1" fill="#0000ff"/>
<rect x="891" y="312" width="1" height="9" fill="#0000ff"/>
<path d="M902.5 316.5 L905.5 319.5 V348.5 L902.5 351.5" fill="none" stroke="#0000ff" stroke-width="1"/>
<g stroke="#0000ff" stroke-width="1" fill="none" shape-rendering="crispEdges">
<path d="M882 349.5 H891"/>
<path d="M882 352.5 H891"/>
<path d="M882 355.5 H891"/>
<path d="M891.5 347 V358"/>
</g>
<path d="M892 348 L898 352.5 L892 357 Z" fill="#e8e8e8" stroke="#0000ff" stroke-width="1"/>
<rect x="899.5" y="350.5" width="4" height="4" rx="1.5" fill="#fff" stroke="#0000ff" stroke-width="1"/>
</svg>
</body></html>
